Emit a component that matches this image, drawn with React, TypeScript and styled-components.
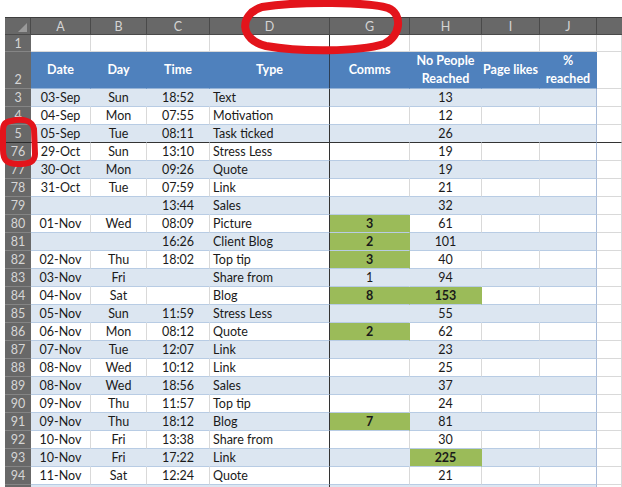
import styled, { createGlobalStyle } from "styled-components";

type DataRow = {
  n: number
  date?: string
  day?: string
  time?: string
  type: string
  comms?: string
  commsGreen?: boolean
  reach: string
  reachGreen?: boolean
}

const rows: DataRow[] = [
  { n: 3, date: "03-Sep", day: "Sun", time: "18:52", type: "Text", reach: "13" },
  { n: 4, date: "04-Sep", day: "Mon", time: "07:55", type: "Motivation", reach: "12" },
  { n: 5, date: "05-Sep", day: "Tue", time: "08:11", type: "Task ticked", reach: "26" },
  { n: 76, date: "29-Oct", day: "Sun", time: "13:10", type: "Stress Less", reach: "19" },
  { n: 77, date: "30-Oct", day: "Mon", time: "09:26", type: "Quote", reach: "19" },
  { n: 78, date: "31-Oct", day: "Tue", time: "07:59", type: "Link", reach: "21" },
  { n: 79, time: "13:44", type: "Sales", reach: "32" },
  { n: 80, date: "01-Nov", day: "Wed", time: "08:09", type: "Picture", comms: "3", commsGreen: true, reach: "61" },
  { n: 81, time: "16:26", type: "Client Blog", comms: "2", commsGreen: true, reach: "101" },
  { n: 82, date: "02-Nov", day: "Thu", time: "18:02", type: "Top tip", comms: "3", commsGreen: true, reach: "40" },
  { n: 83, date: "03-Nov", day: "Fri", type: "Share from", comms: "1", reach: "94" },
  { n: 84, date: "04-Nov", day: "Sat", type: "Blog", comms: "8", commsGreen: true, reach: "153", reachGreen: true },
  { n: 85, date: "05-Nov", day: "Sun", time: "11:59", type: "Stress Less", reach: "55" },
  { n: 86, date: "06-Nov", day: "Mon", time: "08:12", type: "Quote", comms: "2", commsGreen: true, reach: "62" },
  { n: 87, date: "07-Nov", day: "Tue", time: "12:07", type: "Link", reach: "23" },
  { n: 88, date: "08-Nov", day: "Wed", time: "10:12", type: "Link", reach: "25" },
  { n: 89, date: "08-Nov", day: "Wed", time: "18:56", type: "Sales", reach: "37" },
  { n: 90, date: "09-Nov", day: "Thu", time: "11:57", type: "Top tip", reach: "24" },
  { n: 91, date: "09-Nov", day: "Thu", time: "18:12", type: "Blog", comms: "7", commsGreen: true, reach: "81" },
  { n: 92, date: "10-Nov", day: "Fri", time: "13:38", type: "Share from", reach: "30" },
  { n: 93, date: "10-Nov", day: "Fri", time: "17:22", type: "Link", reach: "225", reachGreen: true },
  { n: 94, date: "11-Nov", day: "Sat", time: "12:24", type: "Quote", reach: "21" },
]

const letters = ["A", "B", "C", "D", "G", "H", "I", "J", ""]

const App = () => {
  return (
    <Page>
      <GlobalStyle />
      <Sheet>
        <ColHeadRow>
          <Corner><CornerMark /></Corner>
          {letters.map((l, i) => (
            <ColHead key={i} $last={i === letters.length - 1}>{l}</ColHead>
          ))}
        </ColHeadRow>

        <GridRow $h={17}>
          <RowHead>1</RowHead>
          {letters.map((_, i) => (
            <PlainCell key={i} $frozen={i === 3} />
          ))}
        </GridRow>

        <GridRow $h={37}>
          <RowHead $bottom>2</RowHead>
          <HeadCell>Date</HeadCell>
          <HeadCell>Day</HeadCell>
          <HeadCell>Time</HeadCell>
          <HeadCell $frozen>Type</HeadCell>
          <HeadCell>Comms</HeadCell>
          <HeadCell>No People<br />Reached</HeadCell>
          <HeadCell>Page likes</HeadCell>
          <HeadCell>%<br />reached</HeadCell>
          <PlainCell />
        </GridRow>

        {rows.map((r, i) => {
          const band = i % 2 === 0
          const split = r.n === 5
          return (
            <GridRow key={r.n} $h={18}>
              <RowHead $split={split}>{r.n}</RowHead>
              <Cell $band={band} $split={split}>{r.date}</Cell>
              <Cell $band={band} $split={split}>{r.day}</Cell>
              <Cell $band={band} $split={split}>{r.time}</Cell>
              <Cell $band={band} $split={split} $left $frozen>{r.type}</Cell>
              <Cell $band={band} $split={split} $green={r.commsGreen}>{r.comms}</Cell>
              <Cell $band={band} $split={split} $green={r.reachGreen}>{r.reach}</Cell>
              <Cell $band={band} $split={split} />
              <Cell $band={band} $split={split} $edge />
              <PlainCell $split={split} />
            </GridRow>
          )
        })}

        <GridRow $h={18}>
          <RowHead />
          <Cell $band />
          <Cell $band />
          <Cell $band />
          <Cell $band $frozen />
          <Cell $band />
          <Cell $band />
          <Cell $band />
          <Cell $band $edge />
          <PlainCell />
        </GridRow>
      </Sheet>

      <Marks viewBox="0 0 622 487" width={622} height={487}>
        <path
          d="M262 7 C300 1 368 2 388 8 C403 14 401 36 384 44 C358 52 300 52 266 46 C240 40 238 15 262 7 Z"
          fill="none" stroke="#e3141b" strokeWidth={8} strokeLinejoin="round"
        />
        <path
          d="M11 121 C22 118 32 120 34 129 L35 154 C35 162 29 164 18 164 C7 164 3 160 3 150 L3 131 C3 124 5 122 11 121 Z"
          fill="none" stroke="#e3141b" strokeWidth={6}
        />
      </Marks>
    </Page>
  )
}

export default App;

const GlobalStyle = createGlobalStyle`
  html, body {
    margin: 0;
    padding: 0;
    background: #ffffff;
  }
  body {
    font-family: Lato, "Open Sans", "Liberation Sans", sans-serif;
    font-size: 12.5px;
    color: #1a1a1a;
  }
`;

const cols = "26px 60px 56px 63px 120px 80px 72px 58px 57px 1fr";

const Page = styled.div`
  position: relative;
  width: 622px;
  height: 487px;
  overflow: hidden;
  background: #ffffff;
`;

const Sheet = styled.div`
  display: flex;
  flex-direction: column;
  padding: 17px 0 0 5px;
`;

const ColHeadRow = styled.div`
  display: grid;
  grid-template-columns: ${cols};
  height: 18px;
  background: #686868;
  border-top: 1px solid #3e3e3e;
  border-bottom: 1px solid #4a4a4a;
  box-sizing: border-box;
`;

const Corner = styled.div`
  position: relative;
  border-right: 1px solid #4a4a4a;
`;

const CornerMark = styled.div`
  position: absolute;
  right: 3px;
  bottom: 2px;
  width: 0;
  height: 0;
  border-left: 9px solid transparent;
  border-bottom: 9px solid #9a9a9a;
`;

const ColHead = styled.div<{ $last?: boolean }>`
  display: flex;
  align-items: center;
  justify-content: center;
  color: #d4d4d4;
  font-size: 12.5px;
  border-right: ${p => (p.$last ? "none" : "1px solid #4a4a4a")};
`;

const GridRow = styled.div<{ $h: number }>`
  display: grid;
  grid-template-columns: ${cols};
  height: ${p => p.$h}px;
`;

const RowHead = styled.div<{ $bottom?: boolean; $split?: boolean }>`
  display: flex;
  align-items: ${p => (p.$bottom ? "flex-end" : "center")};
  justify-content: center;
  background: #686868;
  color: #d6d6d6;
  font-size: 12.5px;
  box-sizing: border-box;
  border-bottom: 1px solid ${p => (p.$split ? "#2a2a2a" : "#858585")};
  padding-bottom: ${p => (p.$bottom ? "1px" : "0")};
`;

const PlainCell = styled.div<{ $frozen?: boolean; $split?: boolean }>`
  background: #ffffff;
  box-sizing: border-box;
  border-right: 1px solid ${p => (p.$frozen ? "#333333" : "#d9d9d9")};
  border-bottom: 1px solid ${p => (p.$split ? "#333333" : "#d9d9d9")};
`;

const HeadCell = styled.div<{ $frozen?: boolean }>`
  display: flex;
  align-items: center;
  justify-content: center;
  text-align: center;
  white-space: nowrap;
  background: #4f81bd;
  color: #ffffff;
  font-weight: 700;
  font-size: 12.5px;
  line-height: 18px;
  box-sizing: border-box;
  border-right: 1px solid ${p => (p.$frozen ? "#2c3e55" : "#4f81bd")};
  border-bottom: 1px solid #95b3d7;
`;

const Cell = styled.div<{
  $band?: boolean
  $left?: boolean
  $green?: boolean
  $frozen?: boolean
  $split?: boolean
  $edge?: boolean
}>`
  display: flex;
  align-items: center;
  justify-content: ${p => (p.$left ? "flex-start" : "center")};
  padding-left: ${p => (p.$left ? "3px" : "0")};
  white-space: nowrap;
  overflow: hidden;
  box-sizing: border-box;
  background: ${p => (p.$green ? "#9bbb59" : p.$band ? "#dce6f1" : "#ffffff")};
  font-weight: ${p => (p.$green ? 700 : 400)};
  border-right: 1px solid
    ${p =>
      p.$frozen
        ? "#333333"
        : p.$edge
        ? "#a9bcd9"
        : p.$green
        ? "#9bbb59"
        : p.$band
        ? "#dce6f1"
        : "#d9d9d9"};
  border-bottom: 1px solid ${p => (p.$split ? "#333333" : "#b8cce4")};
`;

const Marks = styled.svg`
  position: absolute;
  left: 0;
  top: 0;
  pointer-events: none;
`;
